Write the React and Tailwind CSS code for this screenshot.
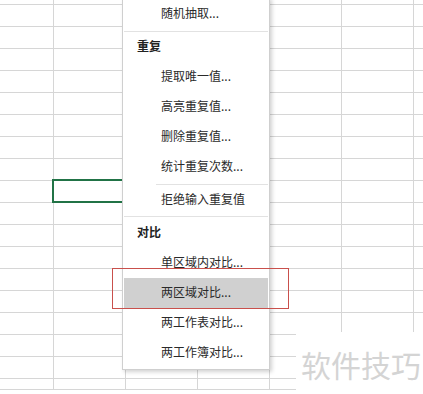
import React from 'react';

const COLS = [54, 72, 72, 72, 72, 72, 81];
const ROWS = [5, 22, 22, 22, 22, 22, 22, 22, 22, 22, 22, 22, 22, 22, 22, 22, 22, 22, 11];

const font = { fontFamily: '"Noto Sans CJK SC", "Noto Sans", sans-serif' };

function Item({ children, active }) {
	return (
		<div className={`h-[30px] flex items-center pl-[37px] pb-[2px] text-[12px] text-[#2a2a2a] ${active ? 'bg-[#d0d0d0]' : ''}`}>
			{children}
		</div>
	);
}

function Header({ children, h }) {
	return (
		<div className={`${h} flex items-center pl-[13px] pb-[3px] text-[12px] font-bold text-[#222]`}>{children}</div>
	);
}

function Sep({ indent }) {
	return (
		<div className="h-[4px] flex items-center">
			<div className={`h-px bg-[#e2e2e2] flex-1 ${indent ? 'ml-[32px]' : ''}`} />
		</div>
	);
}

export default function App() {
	return (
		<div className="relative w-[423px] h-[394px] bg-white overflow-hidden" style={font}>
			{/* sheet grid */}
			<div className="grid" style={{ gridTemplateColumns: COLS.map((c) => c + 'px').join(' '), gridTemplateRows: ROWS.map((r) => r + 'px').join(' ') }}>
				{ROWS.map((_, r) =>
					COLS.map((_, c) => (
						<div key={r + '-' + c} className="border-r border-b border-[#d6d6d6]" />
					))
				)}
			</div>

			{/* active cell */}
			<div className="absolute left-[52px] top-[179px] w-[80px] h-[24px] border-2 border-[#217346]" />

			{/* context menu */}
			<div className="absolute left-[122px] top-[-3px] w-[148px] bg-white border border-[#cfcfcf] p-px shadow-[2px_2px_4px_rgba(0,0,0,0.18)]">
				<Item>随机抽取...</Item>
				<Sep />
				<Header h="h-[29px]">重复</Header>
				<Item>提取唯一值...</Item>
				<Item>高亮重复值...</Item>
				<Item>删除重复值...</Item>
				<Item>统计重复次数...</Item>
				<Sep indent />
				<div className="h-[28px] flex items-center pl-[37px] pb-[2px] text-[12px] text-[#2a2a2a]">拒绝输入重复值</div>
				<Sep />
				<Header h="h-[30px]">对比</Header>
				<Item>单区域内对比...</Item>
				<Item active>两区域对比...</Item>
				<Item>两工作表对比...</Item>
				<Item>两工作簿对比...</Item>
			</div>

			{/* red highlight frame */}
			<div className="absolute left-[112px] top-[268px] w-[177px] h-[41px] border border-[#c9504c]" />

			{/* watermark */}
			<div className="absolute left-[296px] top-[332px] right-0 bottom-0 bg-white flex items-center pl-[5px] pt-[2px] text-[30px] leading-none text-[#d4d4d4]">
				软件技巧
			</div>
		</div>
	);
}
